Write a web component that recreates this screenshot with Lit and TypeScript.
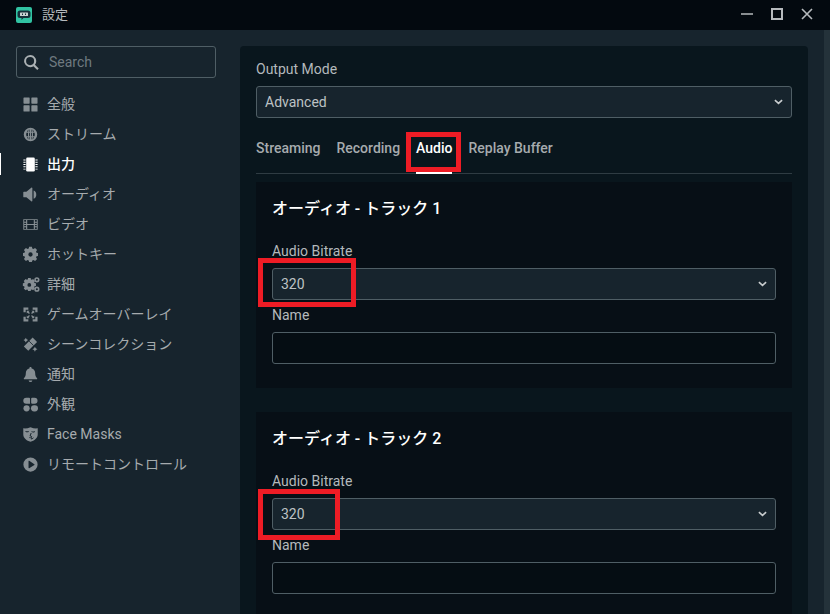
import { LitElement, html, css, svg } from "lit";
import { customElement } from "lit/decorators.js";

const icons: Record<string, any> = {
  grid: svg`<rect x=".5" y=".5" width="6.600" height="6.600" rx=".6"/><rect x="8.900" y=".5" width="6.600" height="6.600" rx=".6"/><rect x=".5" y="8.900" width="6.600" height="6.600" rx=".6"/><rect x="8.900" y="8.900" width="6.600" height="6.600" rx=".6"/>`,
  globe: svg`<path fill-rule="evenodd" d="M8 .8a7.200 7.200 0 1 1 0 14.400A7.200 7.200 0 0 1 8 .8zM5.900 2.600A6 6 0 0 0 4.300 5h1.200c.1-1 .2-1.700.4-2.400zM7.400 2.200C7 3 6.800 4 6.700 5h.7V2.200zm1.200 0V5h.7c-.1-1-.3-2-.7-2.800zm1.500.4c.2.7.3 1.400.4 2.400h1.200a6 6 0 0 0-1.600-2.400zM3.700 6.200a6 6 0 0 0 0 3.600h1.700a15 15 0 0 1 0-3.600zm2.900 0a14 14 0 0 0 0 3.600h.8V6.200zm2 0v3.600h.8a14 14 0 0 0 0-3.600zm2 0a15 15 0 0 1 0 3.600h1.700a6 6 0 0 0 0-3.600zM4.300 11a6 6 0 0 0 1.600 2.400c-.2-.7-.3-1.400-.4-2.400zm2.400 0c.1 1 .3 2 .7 2.800V11zm1.900 0v2.800c.4-.8.600-1.800.7-2.800zm1.900 0c-.1 1-.2 1.700-.4 2.400a6 6 0 0 0 1.600-2.400z"/>`,
  chip: svg`<rect x="3.400" y=".6" width="9.200" height="14.800" rx="1.400"/><path d="M.4 2.600h2.400v1H.4zm0 2.400h2.400v1H.4zm0 2.500h2.400v1H.4zm0 2.400h2.400v1H.4zm0 2.500h2.400v1H.4zM13.200 2.600h2.400v1h-2.400zm0 2.400h2.400v1h-2.400zm0 2.500h2.400v1h-2.400zm0 2.400h2.400v1h-2.400zm0 2.500h2.400v1h-2.400z"/>`,
  speaker: svg`<path d="M1 5h2.600L8.800.8c.5-.4 1.200-.1 1.200.5v13.400c0 .6-.7.9-1.200.5L3.600 11H1c-.4 0-.7-.3-.7-.7V5.700c0-.4.3-.7.7-.7z"/><path d="M11.300 3.600c3.800 1 3.800 7.800 0 8.800z"/>`,
  film: svg`<path fill-rule="evenodd" d="M.3 2.300h15.400v11.400H.3zM1.300 3.300v1.800h2V3.300zm0 2.800v1.400h2V6.100zm0 2.400v1.400h2V8.500zm0 2.400v1.800h2v-1.800zM4.500 3.300v4.200h7V3.300zm0 5.200v4.200h7V8.500zM12.700 3.300v1.800h2V3.300zm0 2.800v1.400h2V6.100zm0 2.400v1.400h2V8.500zm0 2.400v1.800h2v-1.800z"/>`,
  gear: svg`<path fill-rule="evenodd" d="M6.500.5h3l.4 2 1.200.5 1.800-1.100 2.100 2.100L13.900 5.800l.5 1.200 1.600.4v3l-1.600.4-.5 1.200 1.100 1.800-2.100 2.100-1.800-1.100-1.200.5-.4 1.600H6.500l-.4-1.600-1.200-.5-1.800 1.100-2.100-2.100 1.100-1.800-.5-1.200L0 10.400v-3l1.600-.4.5-1.200L1 4l2.100-2.100 1.800 1.100 1.200-.5z" transform="translate(0 -.9) scale(1 1)"/><circle cx="8" cy="8" r="2.300" fill="#17242d"/>`,
  gears: svg`<path fill-rule="evenodd" d="M4.800 3.200h3l.3 1.600 1 .4 1.400-.9 2.100 2.100-.9 1.400.4 1 1.600.3v3l-1.600.3-.4 1 .9 1.400-2.100 2.100-1.400-.9-1 .4-.3 1.400h-3l-.3-1.400-1-.4-1.400.9L0 14.800l.9-1.400-.4-1L-1 12.100v-3l1.500-.3.4-1L0 6.400l2.100-2.100 1.400.9 1-.4z" transform="translate(.8 -1.900) scale(.95)"/><circle cx="6.700" cy="8.500" r="2" fill="#17242d"/><path fill-rule="evenodd" d="M14.800.2a2.800 2.800 0 1 1 0 5.600 2.800 2.800 0 0 1 0-5.600zm0 1.700a1.100 1.100 0 1 0 0 2.200 1.100 1.100 0 0 0 0-2.200zM14.800 10.200a2.800 2.800 0 1 1 0 5.600 2.800 2.800 0 0 1 0-5.600zm0 1.700a1.100 1.100 0 1 0 0 2.200 1.100 1.100 0 0 0 0-2.200z"/>`,
  expand: svg`<path d="M.5 .5h5.200v2.400H2.900v2.800H.5zM10.300 .5h5.200v5.200h-2.400V2.900h-2.800zM.5 10.300h2.400v2.800h2.800v2.400H.5zM13.100 10.300h2.400v5.200h-5.200v-2.400h2.800z"/><path d="M4 4h3L6 5l1.400 1.400-1 1L5 6 4 7zM12 4v3l-1-1-1.400 1.400-1-1L10 5 9 4zM4 12V9l1 1 1.400-1.400 1 1L6 11l1 1zM12 12H9l1-1-1.400-1.400 1-1L11 10l1-1z"/>`,
  wand: svg`<path d="M10.300 .6 15 5.300 5.600 14.700.9 10z"/><path d="M6.500 4.400 11.200 9.100" stroke="#17242d" stroke-width=".9" fill="none"/><path d="M3 .8l.9 1.600 1.600.9-1.600.9L3 5.800l-.9-1.600-1.600-.9 1.600-.9zM12.700 10.400l.9 1.700 1.800.9-1.800.9-.9 1.700-.9-1.700-1.800-.9 1.800-.9z"/>`,
  bell: svg`<path d="M8 0c.7 0 1.200.5 1.200 1.200v.5c2.500.5 3.800 2.500 3.800 5 0 3 .8 4 2 5.200.4.400.1 1.100-.5 1.100H1.500c-.6 0-.9-.7-.5-1.100C2.200 10.700 3 9.700 3 6.700c0-2.500 1.300-4.500 3.800-5v-.5C6.800.5 7.300 0 8 0zM6 14.400h4A2 2 0 0 1 8 16a2 2 0 0 1-2-1.600z"/>`,
  theme: svg`<path d="M3.500.8h3c.6 0 1 .4 1 1v5.400H3.500a3.200 3.200 0 0 1 0-6.400zM8.700 1.800c0-.6.4-1 1-1h2.600a3.200 3.200 0 0 1 0 6.400H9.700c-.6 0-1-.4-1-1z"/><circle cx="3.800" cy="12.100" r="3.300"/><rect x="8.500" y="8.800" width="7.500" height="6.600" rx="3.300"/>`,
  mask: svg`<path fill-rule="evenodd" d="M.3 1.400c2.600.4 5-.2 7.700-1.200 2.700 1 5.100 1.600 7.700 1.200V8c0 3.800-3.600 6.600-7.700 7.800C3.900 14.600.3 11.800.3 8zM2.600 4.200v.9c1.100.7 2.300.8 3.500.1v-.9c-1.200.5-2.400.5-3.500-.1zM9 4.400v1c1.200.6 2.400.6 3.600-.1v-1c-1.200.7-2.400.7-3.600.1zM8.200 6.400 7 9.600l1.800.7-.5.8-1.500-.2-.3.7 2.400.5.900-2.100-1.600-.8 1-2.800zM8.400 12.300v1c1.500-.1 2.800-1 3.400-2.300-1 .8-2.100 1.200-3.400 1.300z"/>`,
  play: svg`<path fill-rule="evenodd" d="M8 .4a7.600 7.600 0 1 1 0 15.200A7.600 7.600 0 0 1 8 .4zM5.900 4.500v7c0 .4.400.6.700.4l5.500-3.400c.3-.2.3-.7 0-.9L6.600 4.100c-.3-.2-.7 0-.7.400z"/>`,
};

const nav = [
  ["grid", "全般"],
  ["globe", "ストリーム"],
  ["chip", "出力", true],
  ["speaker", "オーディオ"],
  ["film", "ビデオ"],
  ["gear", "ホットキー"],
  ["gears", "詳細"],
  ["expand", "ゲームオーバーレイ"],
  ["wand", "シーンコレクション"],
  ["bell", "通知"],
  ["theme", "外観"],
  ["mask", "Face Masks"],
  ["play", "リモートコントロール"],
] as [string, string, boolean?][];

const chevron = html`<svg class="chev" viewBox="0 0 10 6" width="9" height="6"><path d="M1 1l4 3.600L9 1" fill="none" stroke="currentColor" stroke-width="1.800"/></svg>`;

@customElement("app-root")
export class AppRoot extends LitElement {
  static styles = css`
    :host {
      display: block;
      position: relative;
      width: 830px;
      height: 614px;
      overflow: hidden;
      background: #17242d;
      color: #bdc2c4;
      font-family: Roboto, "Noto Sans CJK JP", sans-serif;
      font-size: 14px;
    }
    .titlebar {
      height: 30px;
      background: #03090f;
      display: flex;
      align-items: center;
      padding: 0 16px;
      box-sizing: border-box;
      color: #b6babd;
      font-size: 13px;
    }
    .logo { width: 16px; height: 16px; margin-right: 10px; display: block; }
    .title { flex: 1; line-height: 18px; }
    .winbtns { display: flex; gap: 18px; align-items: center; margin-right: 1px; padding-bottom: 2px; }
    .winbtns svg { display: block; width: 12px; height: 12px; }
    .body { display: flex; height: 584px; }
    .sidebar { width: 240px; flex: none; padding-top: 16px; box-sizing: border-box; }
    .search {
      margin: 0 24px 0 16px;
      height: 32px;
      border: 1px solid #4f5e65;
      border-radius: 3px;
      box-sizing: border-box;
      display: flex;
      align-items: center;
      padding-left: 7px;
      gap: 10px;
      color: #6f7a80;
    }
    .search svg { width: 15px; height: 15px; display: block; fill: #aab0b3; }
    .nav { margin-top: 11px; display: flex; flex-direction: column; }
    .item {
      height: 30px;
      display: flex;
      align-items: center;
      padding-left: 23px;
      gap: 9px;
      color: #a6abae;
      position: relative;
    }
    .item span { line-height: 20px; }
    .item svg { width: 15px; height: 15px; flex: none; fill: #868e93; display: block; overflow: visible; }
    .item.active { color: #fff; font-weight: 500; }
    .item.active svg { fill: #fff; }
    .item.active::before {
      content: "";
      position: absolute;
      left: 0;
      top: 4px;
      bottom: 4px;
      width: 1px;
      background: #fff;
    }
    .content {
      width: 568px;
      flex: none;
      margin-top: 16px;
      background: #09161d;
      border-radius: 4px 4px 0 0;
      padding: 14px 16px 0;
      box-sizing: border-box;
      height: 568px;
      overflow: hidden;
    }
    .label { height: 18px; line-height: 18px; color: #b4b9bc; }
    .select, .input {
      height: 32px;
      border: 1px solid #4f5e65;
      border-radius: 3px;
      box-sizing: border-box;
      background: #17242d;
      display: flex;
      align-items: center;
      padding: 0 8px 0 8px;
      color: #bdc2c4;
      justify-content: space-between;
    }
    .input { background: #050d13; }
    .mt { margin-top: 8px; }
    .chev { color: #c8ccce; }
    .tabs {
      margin-top: 14px;
      height: 41px;
      border-bottom: 1px solid #2f3c43;
      display: flex;
      gap: 16px;
    }
    .tab {
      font-weight: 500;
      color: #a6abae;
      line-height: 32px;
      height: 41px;
      box-sizing: border-box;
      border-bottom: 1px solid transparent;
    }
    .tab.on { color: #fff; border-bottom: 2px solid #fff; height: 42px; }
    .card {
      background: #070f16;
      margin-top: 8px;
      padding: 16px;
      height: 206px;
      box-sizing: border-box;
    }
    .card + .card { margin-top: 24px; }
    .card h2 {
      margin: 0;
      font-size: 16px;
      font-weight: 500;
      color: #fff;
      line-height: 20px;
      padding-top: 1px;
      height: 43px;
    }
    .card .name { margin-top: 6px; }
    .scroll {
      position: absolute;
      right: 0;
      top: 30px;
      width: 6px;
      height: 584px;
      background: #24323a;
    }
    .mark { position: absolute; border: 5px solid #ee1c25; box-sizing: border-box; }
    .m1 { left: 406px; top: 132px; width: 55px; height: 40px; }
    .m2 { left: 258px; top: 258px; width: 98px; height: 49px; }
    .m3 { left: 258px; top: 489px; width: 82px; height: 51px; }
  `;

  card(title: string) {
    return html`<section class="card">
      <h2>${title}</h2>
      <div class="label">Audio Bitrate</div>
      <div class="select mt"><span>320</span>${chevron}</div>
      <div class="label name">Name</div>
      <div class="input mt"></div>
    </section>`;
  }

  render() {
    return html`
      <header class="titlebar">
        <svg class="logo" viewBox="0 0 16 16">
          <rect width="16" height="16" rx="2" fill="#31c3a2" />
          <path d="M4 3.500h8A2.500 2.500 0 0 1 14.500 6v2.500A2.500 2.500 0 0 1 12 11H7.500L5.500 13v-2H4A2.500 2.500 0 0 1 1.500 8.500V6A2.500 2.500 0 0 1 4 3.500z" fill="#17303a" />
          <rect x="4" y="5.500" width="8" height="3.500" rx=".5" fill="#c9d2d2" />
          <path d="M6 6.500h1v1.500H6zm3 0h1v1.500H9z" fill="#17303a" />
        </svg>
        <span class="title">設定</span>
        <div class="winbtns">
          <svg viewBox="0 0 12 12"><path d="M0 6h12" stroke="#b6babd" stroke-width="1.500" /></svg>
          <svg viewBox="0 0 12 12"><path d="M1 1h10v10H1z" fill="none" stroke="#b6babd" stroke-width="2" /></svg>
          <svg viewBox="0 0 12 12"><path d="M1 1l10 10M11 1L1 11" stroke="#b6babd" stroke-width="1.600" /></svg>
        </div>
      </header>
      <div class="body">
        <aside class="sidebar">
          <div class="search">
            <svg viewBox="0 0 16 16"><path fill-rule="evenodd" d="M6.500 0a6.500 6.500 0 0 1 5.200 10.400l4 4-1.600 1.600-4-4A6.500 6.500 0 1 1 6.500 0zm0 2.200a4.300 4.300 0 1 0 0 8.600 4.300 4.300 0 0 0 0-8.600z" /></svg>
            <span>Search</span>
          </div>
          <nav class="nav">
            ${nav.map(
              ([ic, t, a]) => html`<div class="item ${a ? "active" : ""}">
                <svg viewBox="0 0 16 16">${icons[ic]}</svg><span>${t}</span>
              </div>`
            )}
          </nav>
        </aside>
        <main class="content">
          <div class="label">Output Mode</div>
          <div class="select mt"><span>Advanced</span>${chevron}</div>
          <div class="tabs">
            <div class="tab">Streaming</div>
            <div class="tab">Recording</div>
            <div class="tab on">Audio</div>
            <div class="tab">Replay Buffer</div>
          </div>
          ${this.card("オーディオ - トラック 1")} ${this.card("オーディオ - トラック 2")}
        </main>
      </div>
      <div class="scroll"></div>
      <div class="mark m1"></div>
      <div class="mark m2"></div>
      <div class="mark m3"></div>
    `;
  }
}
